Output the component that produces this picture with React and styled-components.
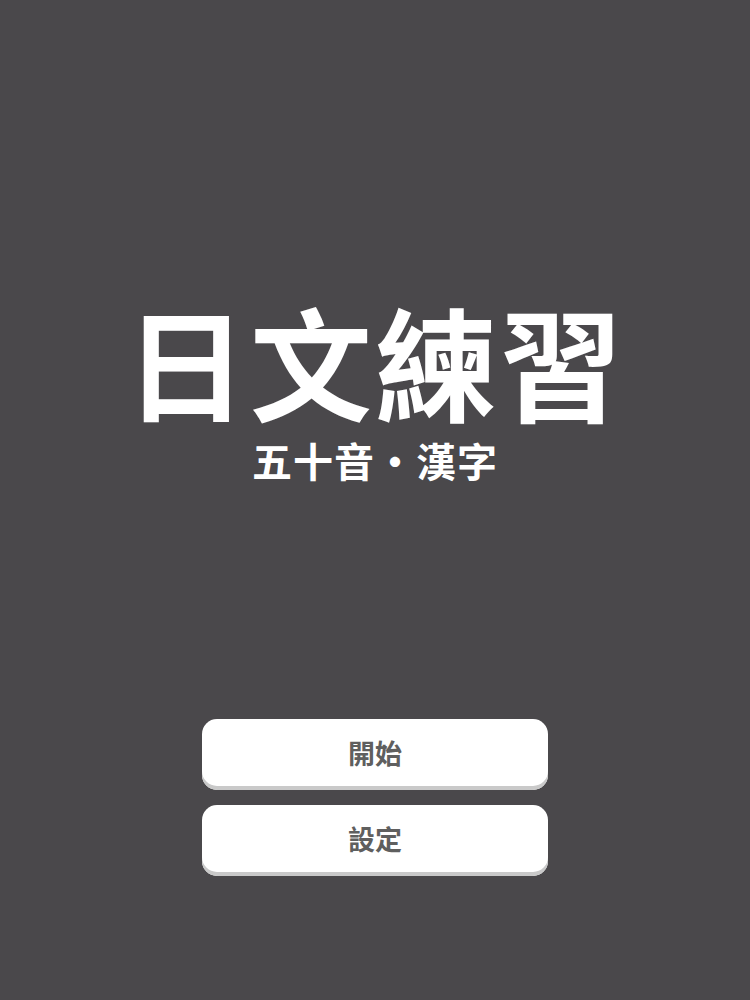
import React from 'react';
import styled, { createGlobalStyle } from 'styled-components';

const GlobalStyle = createGlobalStyle`
  html, body {
    margin: 0;
    padding: 0;
    background: #4a484b;
  }
  body {
    font-family: "Noto Sans CJK TC", "Noto Sans CJK JP", sans-serif;
  }
`;

const StyledWrap = styled.div`
  width: 750px;
  height: 1000px;
  display: flex;
  flex-direction: column;
  align-items: center;
  background: #4a484b;
`;

const StyledTitleBlock = styled.div`
  display: flex;
  flex-direction: column;
  align-items: center;
  padding-top: 286px;
`;

const StyledTitle = styled.h1`
  margin: 0;
  font-size: 122px;
  line-height: 1.2;
  font-weight: 700;
  letter-spacing: 3px;
  color: #ffffff;
`;

const StyledSubtitle = styled.div`
  margin-top: 4px;
  font-size: 40px;
  line-height: 1.2;
  font-weight: 700;
  letter-spacing: 1px;
  color: #ffffff;
`;

const StyledMenu = styled.div`
  margin-top: 235px;
  display: flex;
  flex-direction: column;
  gap: 15px;
`;

const StyledButton = styled.button`
  width: 346px;
  height: 71px;
  border: none;
  border-radius: 15px;
  background: #ffffff;
  box-shadow: inset 0 -4px 0 #c9c9c9;
  padding: 0 0 4px;
  font-family: inherit;
  font-size: 27px;
  font-weight: 700;
  color: #5f5f5f;
  cursor: pointer;
`;

function App() {
  return (
    <>
      <GlobalStyle />
      <StyledWrap>
        <StyledTitleBlock>
          <StyledTitle>日文練習</StyledTitle>
          <StyledSubtitle>五十音・漢字</StyledSubtitle>
        </StyledTitleBlock>
        <StyledMenu>
          <StyledButton>開始</StyledButton>
          <StyledButton>設定</StyledButton>
        </StyledMenu>
      </StyledWrap>
    </>
  );
}

export default App;
